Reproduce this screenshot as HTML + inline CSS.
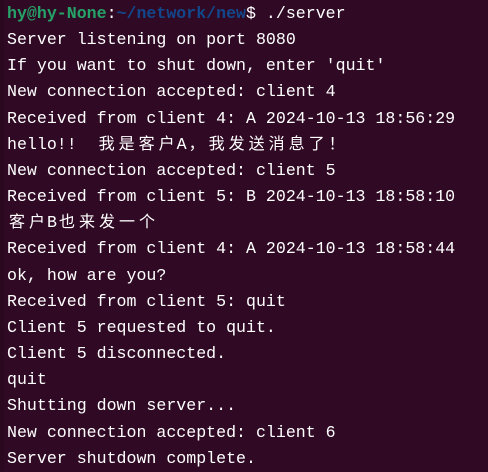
<!DOCTYPE html>
<html><head><meta charset="utf-8"><style>
html,body{margin:0;padding:0;}
body{width:488px;height:471px;background:#300a24;overflow:hidden;position:relative;}
.strip{position:absolute;left:0;top:0;width:4px;height:471px;background:#2a0820;}
pre{margin:0;position:absolute;left:7px;top:1px;font-family:"Liberation Mono","Noto Sans CJK SC",monospace;font-size:16.6px;line-height:26.15px;color:#ffffff;white-space:pre;}
.g{color:#26a269;font-weight:bold;}
.b{color:#12488b;font-weight:bold;}
.c{display:inline-block;width:20px;text-align:center;font-family:"Noto Sans CJK SC",sans-serif;font-size:16px;line-height:1;}
</style></head><body><div class="strip"></div><pre><span class="g">hy@hy-None</span>:<span class="b">~/network/new</span>$ ./server
Server listening on port 8080
If you want to shut down, enter 'quit'
New connection accepted: client 4
Received from client 4: A 2024-10-13 18:56:29
hello!!  <span class="c">我</span><span class="c">是</span><span class="c">客</span><span class="c">户</span>A<span class="c">，</span><span class="c">我</span><span class="c">发</span><span class="c">送</span><span class="c">消</span><span class="c">息</span><span class="c">了</span><span class="c">！</span>
New connection accepted: client 5
Received from client 5: B 2024-10-13 18:58:10
<span class="c">客</span><span class="c">户</span>B<span class="c">也</span><span class="c">来</span><span class="c">发</span><span class="c">一</span><span class="c">个</span>
Received from client 4: A 2024-10-13 18:58:44
ok, how are you?
Received from client 5: quit
Client 5 requested to quit.
Client 5 disconnected.
quit
Shutting down server...
New connection accepted: client 6
Server shutdown complete.</pre></body></html>
